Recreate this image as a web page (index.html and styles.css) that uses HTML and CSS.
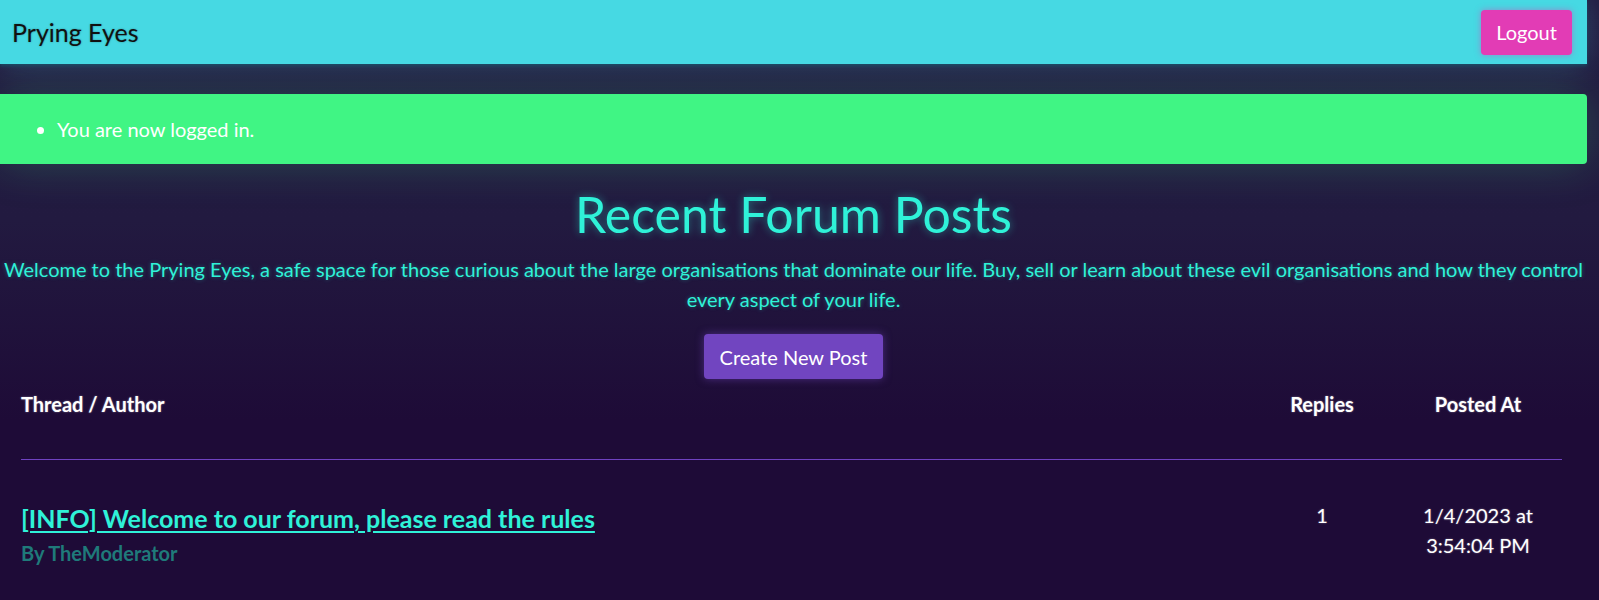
FILE: index.html
```html
<!DOCTYPE html>
<html lang="en">
<head>
<meta charset="utf-8">
<title>Prying Eyes</title>
<link rel="stylesheet" href="styles.css">
</head>
<body>
<div class="page">
  <nav class="navbar">
    <span class="brand">Prying Eyes</span>
    <button class="btn-logout">Logout</button>
  </nav>
  <div class="alert">
    <ul>
      <li>You are now logged in.</li>
    </ul>
  </div>
  <main class="content">
    <h1 class="title">Recent Forum Posts</h1>
    <p class="intro">Welcome to the Prying Eyes, a safe space for those curious about the large organisations that dominate our life. Buy, sell or learn about these evil organisations and how they control every aspect of your life.</p>
    <div class="actions">
      <button class="btn-create">Create New Post</button>
    </div>
    <div class="posts">
      <div class="row head">
        <div class="cell">Thread / Author</div>
        <div class="cell center">Replies</div>
        <div class="cell center">Posted At</div>
      </div>
      <div class="row post">
        <div class="cell">
          <a class="thread" href="#">[INFO] Welcome to our forum, please read the rules</a>
          <div class="author">By TheModerator</div>
        </div>
        <div class="cell center num">1</div>
        <div class="cell center num">1/4/2023 at<br>3:54:04 PM</div>
      </div>
    </div>
  </main>
</div>
</body>
</html>
```

FILE: styles.css
```css
html, body {
  margin: 0;
  padding: 0;
}
body {
  background: #1e0b37;
  font-family: Lato, "Open Sans", sans-serif;
  color: #fff;
  overflow: hidden;
  height: 600px;
  background-image: linear-gradient(180deg, #241c42 0px, #221a40 220px, #1e0b37 420px);
}
.page {
  width: 1587px;
}
.navbar {
  height: 64px;
  background: #46d9e3;
  display: flex;
  align-items: center;
  justify-content: space-between;
  padding: 0 15px 0 12px;
  box-sizing: border-box;
  box-shadow: 0 2px 3px rgba(20, 90, 110, 0.6), 0 0 30px rgba(70, 217, 227, 0.25);
  position: relative;
  z-index: 2;
}
.brand {
  font-size: 25px;
  color: #111;
  text-shadow: 0 0 2px rgba(0, 0, 0, 0.35);
}
.btn-logout {
  font-family: inherit;
  font-size: 20px;
  color: #fff;
  background: #e23cb5;
  border: 0;
  border-radius: 4px;
  height: 45px;
  width: 91px;
  padding: 0;
  box-shadow: 0 0 6px rgba(226, 60, 181, 0.5);
}
.alert {
  margin-top: 30px;
  height: 70px;
  background: #40f584;
  border-radius: 0 4px 4px 0;
  display: flex;
  align-items: center;
  padding-left: 17px;
  box-shadow: 0 0 45px rgba(64, 245, 132, 0.22);
}
.alert ul {
  margin: 0;
  padding-left: 40px;
  font-size: 20px;
  line-height: 30px;
}
.content {
  text-align: center;
}
.title {
  margin: 20px 0 0;
  font-size: 50px;
  font-weight: 400;
  line-height: 60px;
  color: #2ff2d8;
  text-shadow: 0 0 8px rgba(47, 242, 216, 0.45);
}
.intro {
  margin: 10px 0 0;
  font-size: 20px;
  line-height: 30px;
  color: #2ff2d8;
  text-shadow: 0 0 4px rgba(47, 242, 216, 0.35);
}
.actions {
  margin-top: 20px;
  height: 45px;
}
.btn-create {
  font-family: inherit;
  font-size: 20px;
  color: #fff;
  background: #7145c0;
  border: 0;
  border-radius: 4px;
  height: 45px;
  width: 179px;
  padding: 0;
  vertical-align: top;
  box-shadow: 0 0 8px rgba(113, 69, 192, 0.55);
}
.posts {
  margin: 10px 25px 0 21px;
  text-align: left;
}
.row {
  display: grid;
  grid-template-columns: 1fr 144px 168px;
}
.center {
  text-align: center;
}
.head {
  font-size: 20px;
  font-weight: 700;
  line-height: 30px;
  padding-bottom: 40px;
  border-bottom: 1px solid #6f42c1;
  text-shadow: 0 0 2px rgba(255, 255, 255, 0.45);
}
.post {
  padding-top: 40px;
}
.thread {
  display: inline-block;
  margin-top: 3px;
  font-size: 25px;
  font-weight: 700;
  line-height: 30px;
  color: #2ff2d8;
  text-decoration: underline;
  text-decoration-thickness: 2px;
  text-underline-offset: 3px;
}
.author {
  margin-top: 5px;
  font-size: 20px;
  font-weight: 700;
  line-height: 30px;
  color: #1f7a7a;
}
.num {
  font-size: 20px;
  line-height: 30px;
  text-shadow: 0 0 2px rgba(255, 255, 255, 0.4);
}
```
